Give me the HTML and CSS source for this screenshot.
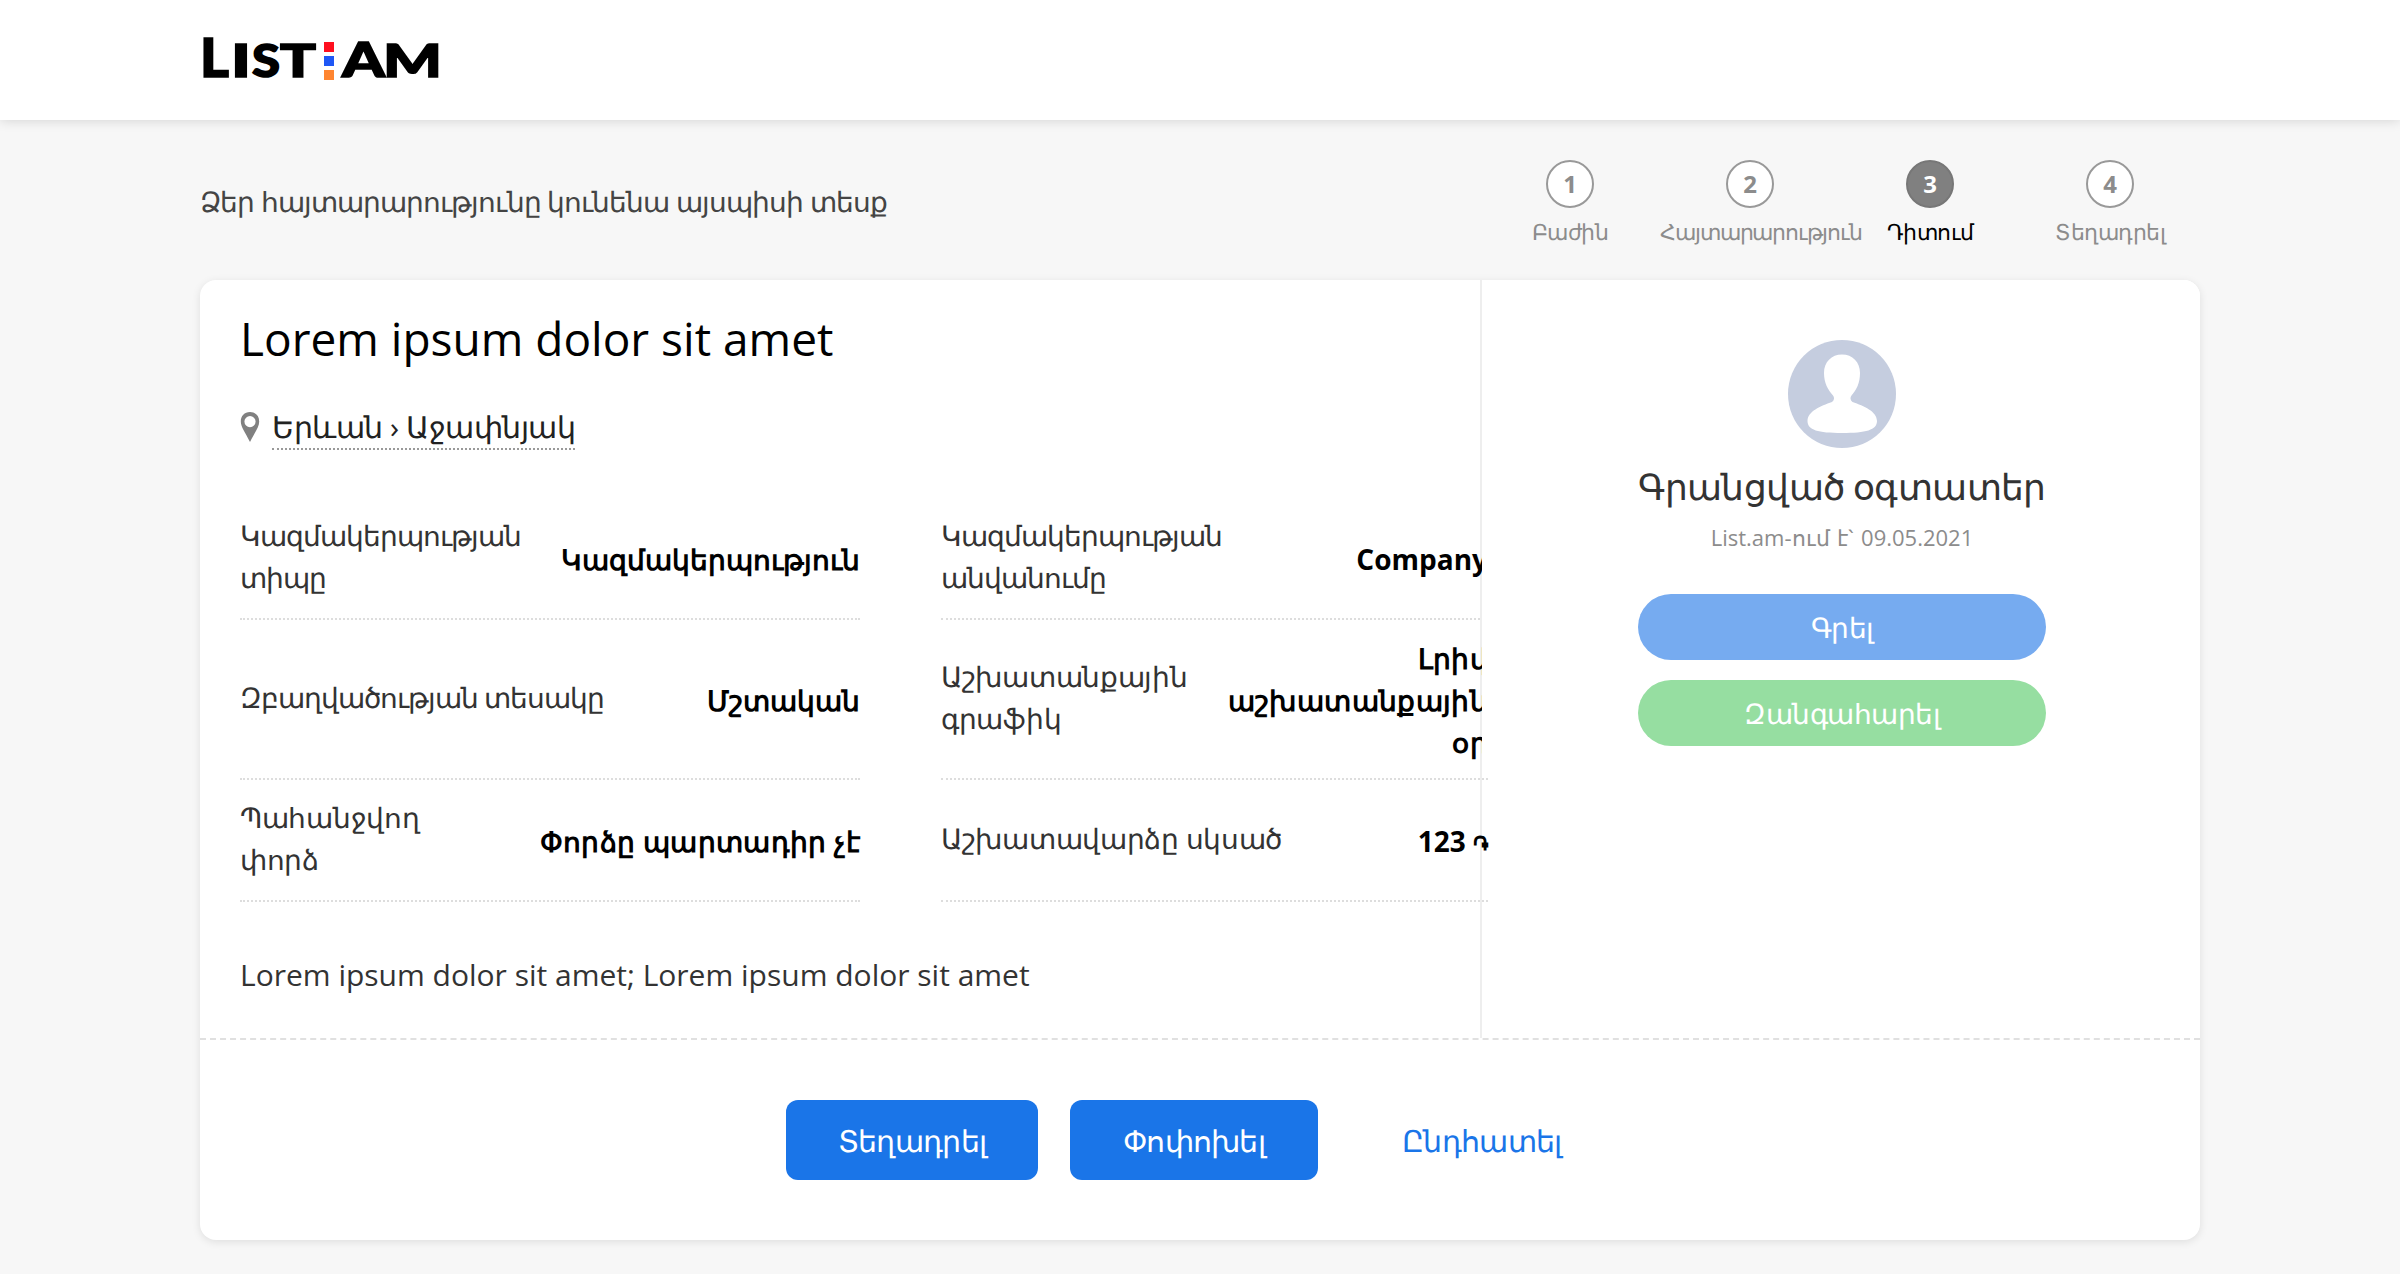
FILE: index.html
```html
<!DOCTYPE html>
<html lang="hy">
<head>
<meta charset="utf-8">
<title>List.am</title>
<link rel="stylesheet" href="styles.css">
</head>
<body>
<header class="header">
  <div class="wrap">
    <svg class="logo" width="268" height="80" viewBox="-8 -16 268 80" role="img" aria-label="List.am">
      <g class="logo-text">
        <text x="0" y="43" font-size="54" textLength="29" lengthAdjust="spacingAndGlyphs">L</text>
        <text x="31" y="43" font-size="45.500" textLength="20" lengthAdjust="spacingAndGlyphs">I</text>
        <text x="52" y="43" font-size="45" textLength="28" lengthAdjust="spacingAndGlyphs">S</text>
        <text x="80" y="43" font-size="45.500" textLength="36" lengthAdjust="spacingAndGlyphs">T</text>
        <text x="142" y="43" font-size="48" textLength="43" lengthAdjust="spacingAndGlyphs">A</text>
        <text x="183" y="43" font-size="46" textLength="59" lengthAdjust="spacingAndGlyphs">M</text>
      </g>
      <rect x="124" y="8" width="10" height="10" fill="#ff0f1f"/>
      <rect x="124" y="22" width="10" height="10" fill="#1f57f5"/>
      <rect x="124" y="36" width="10" height="10" fill="#ff8530"/>
    </svg>
  </div>
</header>
<main class="wrap">
  <div class="top">
    <div class="top-title">Ձեր հայտարարությունը կունենա այսպիսի տեսք</div>
    <ol class="steps">
      <li class="step"><span class="num">1</span><span class="name">Բաժին</span></li>
      <li class="step"><span class="num">2</span><span class="name name-long">Հայտարարություն</span></li>
      <li class="step active"><span class="num">3</span><span class="name">Դիտում</span></li>
      <li class="step"><span class="num">4</span><span class="name">Տեղադրել</span></li>
    </ol>
  </div>
  <div class="card">
    <div class="content">
      <section class="ad">
        <h1 class="title">Lorem ipsum dolor sit amet</h1>
        <div class="place">
          <svg class="pin" width="20" height="32" viewBox="0 0 20 32"><path fill="#808080" fill-rule="evenodd" d="M10 0C4.400 0 .8 4 .8 9.500.8 15 5 20 10 30c5-10 9.200-15 9.200-20.500C19.200 4 15.600 0 10 0zm0 4a5.600 5.600 0 1 1 0 11.200A5.600 5.600 0 0 1 10 4z"/></svg>
          <a class="place-link">Երևան › Աջափնյակ</a>
        </div>
        <div class="attrs">
          <div class="attr"><span class="label tight">Կազմակերպության<br>տիպը</span><span class="value">Կազմակերպություն</span></div>
          <div class="attr"><span class="label tight">Կազմակերպության<br>անվանումը</span><span class="value">Company</span></div>
          <div class="attr"><span class="label tight">Զբաղվածության տեսակը</span><span class="value">Մշտական</span></div>
          <div class="attr"><span class="label">Աշխատանքային<br>գրաֆիկ</span><span class="value loose">Լրիվ<br>աշխատանքային<br>օր</span></div>
          <div class="attr"><span class="label">Պահանջվող<br>փորձ</span><span class="value loose">Փորձը պարտադիր չէ</span></div>
          <div class="attr"><span class="label">Աշխատավարձը սկսած</span><span class="value">123 <span class="dram">֏</span></span></div>
        </div>
        <p class="body">Lorem ipsum dolor sit amet; Lorem ipsum dolor sit amet</p>
      </section>
      <aside class="side">
        <div class="user">
          <svg class="avatar" width="108" height="108" viewBox="0 0 108 108"><circle cx="54" cy="54" r="54" fill="#c5cddf"/><path fill="#fff" d="M54 14.500c10.500 0 18 7.500 18 18.500 0 10-3.500 17-8.500 22.500-1.500 2-1.500 4.500 1 6.500C76 66 89 71.500 89 81c0 9-11 12-35 12s-34.500-3-34.500-12c0-9.500 13-15 24.500-19 2.500-2 2.500-4.500 1-6.500C40 50 36 43 36 33c0-11 7.500-18.500 18-18.500z"/></svg>
          <div class="user-name">Գրանցված օգտատեր</div>
          <div class="since">List.am-ում է` 09.05.2021</div>
          <a class="pill write">Գրել</a>
          <a class="pill call">Զանգահարել</a>
        </div>
      </aside>
    </div>
    <div class="actions">
      <a class="btn post">Տեղադրել</a>
      <a class="btn edit">Փոփոխել</a>
      <a class="cancel">Ընդհատել</a>
    </div>
  </div>
</main>
</body>
</html>
```
FILE: styles.css
```css
* { box-sizing: border-box; }
body {
  margin: 0;
  height: 1274px;
  overflow: hidden;
  background: #f7f7f7;
  font-family: "Open Sans", "Noto Sans", sans-serif;
  font-size: 28px;
  line-height: 42px;
  color: #333;
}
.wrap { width: 2000px; margin: 0 auto; }
.header {
  height: 120px;
  padding-top: 18px;
  background: #fff;
  box-shadow: 0 0 12px rgba(0, 0, 0, .16);
}
.logo { display: block; margin-left: -8px; }
.logo-text { font-family: Lato, sans-serif; font-weight: 900; fill: #000; stroke: #000; stroke-width: 1.500px; }
.top { display: flex; justify-content: space-between; height: 160px; }
.top-title { padding-top: 60px; color: #444; letter-spacing: -.93px; }
.steps { display: flex; list-style: none; margin: 0; padding: 40px 0 0; width: 720px; }
.step { width: 180px; display: flex; flex-direction: column; align-items: center; color: #8c8c8c; }
.num {
  width: 48px; height: 48px;
  border: 2px solid #999; border-radius: 50%;
  background: #fff;
  font-size: 24px; font-weight: 700; line-height: 44px; text-align: center;
}
.name { width: 100%; margin-top: 6px; font-size: 22px; line-height: 34px; white-space: nowrap; text-align: center; letter-spacing: -.5px; }
.name-long { letter-spacing: -1.1px; }
.active { color: #000; }
.active .num { background: #808080; border-color: #777; color: #fff; }
.card { height: 960px; background: #fff; border-radius: 16px; box-shadow: 0 2px 8px rgba(0, 0, 0, .1); }
.content { display: flex; height: 758px; }
.ad { width: 1282px; padding: 23px 0 0 40px; border-right: 2px solid #eee; }
.title { margin: 0; font-size: 46px; line-height: 70px; font-weight: 400; color: #000; }
.place { display: flex; margin-top: 34px; gap: 12px; }
.pin { margin-top: 5px; }
.place-link { height: 43px; font-size: 30px; line-height: 40px; color: #222; border-bottom: 2px dotted #999; letter-spacing: -.45px; }
.attrs {
  display: grid;
  grid-template-columns: 620px 547px;
  grid-template-rows: 122px 160px 122px;
  column-gap: 81px;
  margin-top: 48px;
}
.attr { display: flex; align-items: center; justify-content: space-between; border-bottom: 2px dotted #ddd; }
.label { margin-top: -4px; letter-spacing: -.3px; white-space: nowrap; }
.tight { letter-spacing: -1px; }
.value { margin-top: 1px; font-weight: 700; color: #000; text-align: right; white-space: nowrap; }
.loose { letter-spacing: .35px; }
.dram { font-family: "Noto Sans", sans-serif; font-size: 21px; line-height: 1; }
.body { margin: 50px 0 0; font-size: 30px; line-height: 46px; }
.side { width: 718px; }
.user { position: relative; height: 497px; padding: 60px 0 0 2px; background: #fff; border-radius: 0 16px 0 0; display: flex; flex-direction: column; align-items: center; }
.user-name { margin-top: 12px; font-size: 36px; line-height: 54px; letter-spacing: -.6px; }
.since { margin-top: 6px; font-size: 22px; line-height: 34px; color: #8c8c8c; word-spacing: 1.500px; }
.pill { width: 408px; height: 66px; border-radius: 33px; color: #fff; line-height: 66px; text-align: center; letter-spacing: -.5px; }
.write { margin-top: 40px; background: #76abf0; }
.call { margin-top: 20px; background: #96dea1; }
.actions { display: flex; align-items: flex-start; height: 202px; padding: 60px 0 0 586px; border-top: 2px dashed #e0e0e0; font-size: 30px; letter-spacing: -.7px; }
.btn { height: 80px; border-radius: 12px; background: #1a75e8; color: #fff; line-height: 82px; text-align: center; }
.post { width: 252px; margin-right: 32px; }
.edit { width: 248px; margin-right: 84px; }
.cancel { color: #1a75e8; line-height: 82px; }
```
